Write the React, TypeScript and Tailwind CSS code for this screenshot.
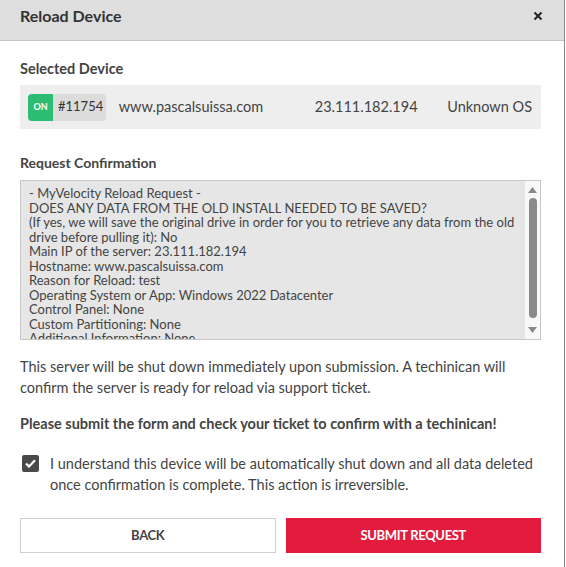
const requestText = [
  "- MyVelocity Reload Request -",
  "DOES ANY DATA FROM THE OLD INSTALL NEEDED TO BE SAVED?",
  "(If yes, we will save the original drive in order for you to retrieve any data from the old",
  "drive before pulling it): No",
  "Main IP of the server: 23.111.182.194",
  "Hostname: www.pascalsuissa.com",
  "Reason for Reload: test",
  "Operating System or App: Windows 2022 Datacenter",
  "Control Panel: None",
  "Custom Partitioning: None",
  "Additional Information: None",
];

const App = () => {
  return (
    <div className="w-[566px] h-[567px] bg-white font-['Lato','Open_Sans',sans-serif] text-[#444]">
      <div className="w-[565px] h-full border-r border-[#8a8a8a] flex flex-col">
        {/* header */}
        <div className="h-[41px] bg-[#dedede] border-b border-[#c4c4c4] flex items-center justify-between pl-5 pr-[21px] pb-[9px]">
          <h1 className="text-[16px] font-bold text-[#333]">Reload Device</h1>
          <svg width="10" height="10" viewBox="0 0 10 10">
            <path d="M1.5 1.5L8.5 8.5M8.5 1.5L1.5 8.5" stroke="#222" strokeWidth="2" />
          </svg>
        </div>

        <div className="pl-5 pr-[23px] flex flex-col">
          <h2 className="mt-[18px] text-[14.5px] font-bold text-[#444] leading-5">Selected Device</h2>
          <div className="mt-[6px] w-[521px] h-[44px] bg-[#eeeeee] flex items-center pl-2 pr-[9px] text-[14.5px] text-[#444]">
            <div className="flex h-[27px] w-[78px] bg-[#dcdcdc] rounded-sm overflow-hidden">
              <div className="w-[25px] bg-[#2dbd72] text-white text-[9px] font-bold flex items-center justify-center">ON</div>
              <div className="flex-1 flex items-center pl-[5px] text-[13px] text-[#333]">#11754</div>
            </div>
            <span className="ml-[13px] w-[197px] whitespace-nowrap">www.pascalsuissa.com</span>
            <span className="w-[133px] whitespace-nowrap">23.111.182.194</span>
            <span className="ml-auto whitespace-nowrap">Unknown OS</span>
          </div>

          <h2 className="mt-[24px] text-[14px] font-bold text-[#444] leading-5">Request Confirmation</h2>
          <div className="mt-[7px] w-[521px] h-[160px] border border-[#c8c8c8] bg-[#e6e6e6] flex overflow-hidden">
            <div className="flex-1 pl-[8px] pt-[5px] text-[13px] leading-[14.5px] text-[#444] overflow-hidden">
              {requestText.map((line, i) => (
                <div key={i} className="whitespace-nowrap">{line}</div>
              ))}
            </div>
            <div className="w-[15px] bg-[#f8f8f8] flex flex-col items-center justify-between py-[6px]">
              <svg width="9" height="6" viewBox="0 0 9 6"><path d="M4.5 0L9 6H0z" fill="#8a8a8a" /></svg>
              <div className="flex-1 w-full flex flex-col pt-[5px] pb-[4px] items-center">
                <div className="w-[8px] h-[120px] rounded bg-[#8a8a8a]"></div>
              </div>
              <svg width="9" height="6" viewBox="0 0 9 6"><path d="M0 0H9L4.5 6z" fill="#8a8a8a" /></svg>
            </div>
          </div>

          <p className="mt-[16px] text-[14.5px] leading-[21px] text-[#444]">
            This server will be shut down immediately upon submission. A techinican will confirm the server is ready for reload via support ticket.
          </p>
          <p className="mt-[15px] text-[14.5px] leading-[21px] font-bold text-[#444]">
            Please submit the form and check your ticket to confirm with a techinican!
          </p>

          <div className="mt-[19px] flex items-start gap-[11px] pl-[2px]">
            <div className="mt-[2px] w-[17px] h-[17px] shrink-0 bg-[#4a4a4a] rounded-[2px] flex items-center justify-center">
              <svg width="11" height="9" viewBox="0 0 11 9">
                <path d="M1 4.5L4 7.5L10 1.2" stroke="white" strokeWidth="2.2" fill="none" />
              </svg>
            </div>
            <p className="text-[14.5px] leading-[21px] text-[#444]">
              I understand this device will be automatically shut down and all data deleted once confirmation is complete. This action is irreversible.
            </p>
          </div>

          <div className="mt-[23px] grid grid-cols-2 gap-[10px]">
            <button className="h-[35px] border border-[#d0d0d0] bg-white text-[13px] font-bold text-[#444] tracking-tight">BACK</button>
            <button className="h-[35px] bg-[#e31c3d] text-[13px] font-bold text-white tracking-tight">SUBMIT REQUEST</button>
          </div>
        </div>
      </div>
    </div>
  );
};

export default App;
